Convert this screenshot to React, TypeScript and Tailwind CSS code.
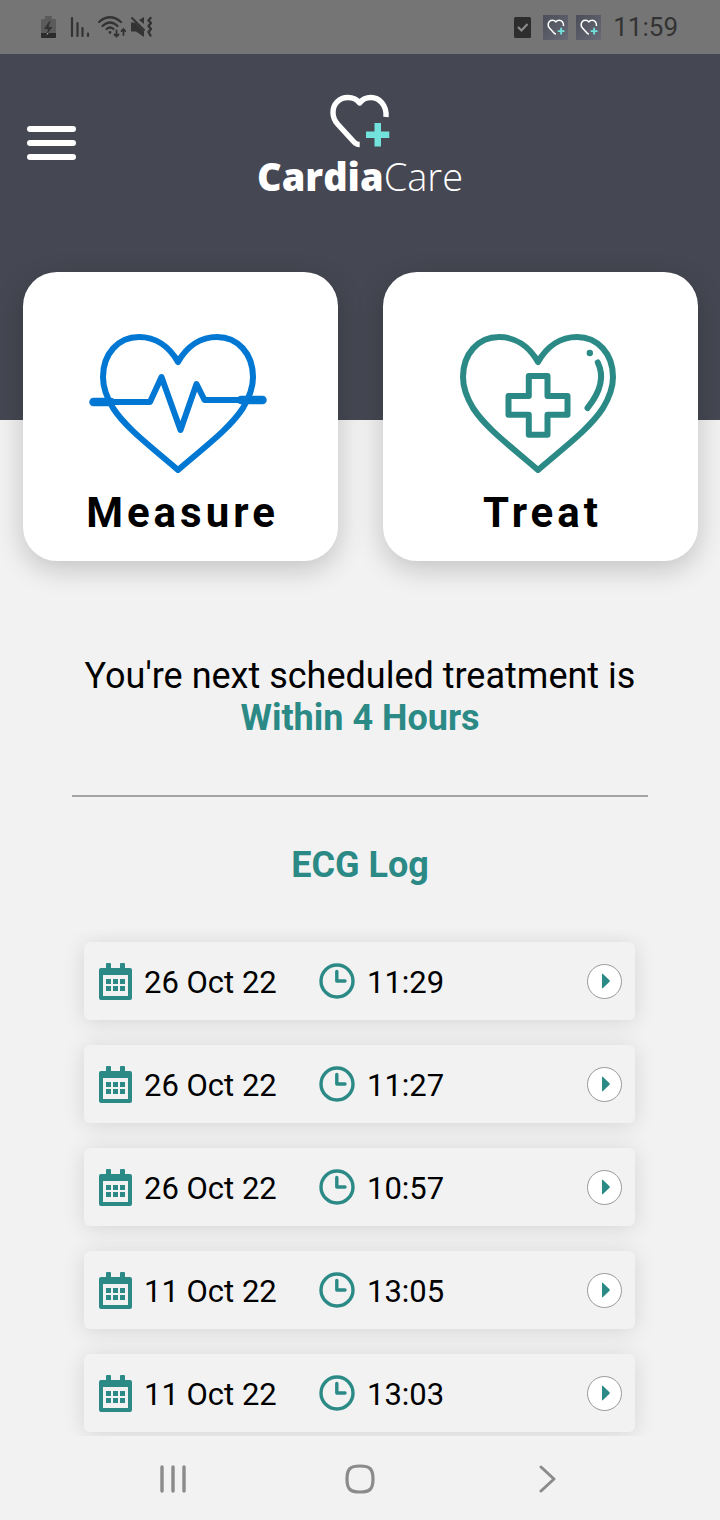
import React from 'react';

interface LogEntry {
  date: string;
  time: string;
}

const ecgLog: LogEntry[] = [
  { date: '26 Oct 22', time: '11:29' },
  { date: '26 Oct 22', time: '11:27' },
  { date: '26 Oct 22', time: '10:57' },
  { date: '11 Oct 22', time: '13:05' },
  { date: '11 Oct 22', time: '13:03' },
];

const HEART =
  'M89 30 C80 14 66 5 50 5 C29 5 14 22 14 45 C14 57 18 66 24 76 C37 96 60 113 89 138 C118 113 141 96 154 76 C160 66 164 57 164 45 C164 22 149 5 128 5 C112 5 98 14 89 30 Z';

const LogoMark: React.FC<{ className?: string }> = ({ className }) => (
  <svg viewBox="0 0 62 55" className={className} fill="none" aria-hidden="true">
    <path
      d="M57 24 C58 12 50 4.5 42 4.5 C37 4.5 33 6.500 30.700 10 C28 6.500 23 4.500 19 4.500 C10 4.500 4 11 4 19.500 C4 24 5.500 27.500 8.500 31 L25 49 C26.500 50.700 28 51.500 30.700 51.500"
      stroke="#ffffff"
      strokeWidth="5.4"
      strokeLinejoin="round"
    />
    <path d="M45.500 30 h6.500 v8.500 h8.300 v6.500 h-8.300 v8.500 h-6.500 v-8.500 h-8.500 v-6.500 h8.500 Z" fill="#74e2dc" />
  </svg>
);

const StatusBar: React.FC = () => (
  <div className="flex h-[54px] items-center justify-between bg-[#757575] pl-[41px] pr-[42px] text-[#333333]">
    <div className="flex items-center gap-2">
      <svg width="15" height="23" viewBox="0 0 15 23" aria-hidden="true">
        <path d="M4 0 h7 v3 h3 q1 0 1 1 v13 H0 V4 q0 -1 1 -1 h3 Z" fill="#5b5b5b" />
        <path d="M0 17 h15 v4 q0 1 -1 1 H1 q-1 0 -1 -1 Z" fill="#2b2b2b" />
        <path d="M8.500 5 L3 13 h4 L5.500 19 L11.500 11 h-4 L9.500 5 Z" fill="#333333" />
        <path d="M6.500 17 h1 l-2 2.500 Z" fill="#e5e5e5" />
      </svg>
      <svg width="34" height="22" viewBox="0 0 34 22" aria-hidden="true">
        <g transform="translate(6 0)" stroke="currentColor" strokeWidth="2.2" strokeLinecap="round">
          <path d="M2 2 V20 M7.500 7 V20 M12.500 12 V20 M18 17.500 V20" />
        </g>
      </svg>
      <svg width="28" height="22" viewBox="0 0 28 22" fill="none" stroke="currentColor" strokeWidth="2.2" strokeLinecap="round" className="-ml-2" aria-hidden="true">
        <path d="M1 6 Q12 -3.500 23 6 M4.500 10 Q12 3 19.500 10 M8.500 13 Q12 10 15.500 13" />
        <circle cx="12" cy="16.500" r="0.800" fill="currentColor" strokeWidth="1.200" />
        <path d="M18.500 14.500 V20.500 M16.500 18.500 L18.500 20.500 L20.500 18.500 M25.500 19 V13 M23.500 15 L25.500 13 L27.200 15" strokeWidth="1.800" />
      </svg>
      <svg width="23" height="22" viewBox="0 0 23 22" fill="none" stroke="currentColor" strokeWidth="2.400" strokeLinecap="round" className="-ml-1" aria-hidden="true">
        <path d="M1 6.500 h4 l9 9 v5.500 L6 15.500 H1 Z M9 4 L14 1 V8 Z" fill="currentColor" stroke="none" />
        <path d="M2 2 L14 14" strokeWidth="2" />
        <path d="M20.500 2 L18.500 4.500 L21 7 L18.500 10 L21 13 L18.500 16 L20.500 19.500" strokeLinejoin="round" />
      </svg>
    </div>
    <div className="flex items-center gap-2">
      <svg width="17" height="21" viewBox="0 0 17 21" className="mr-1" aria-hidden="true">
        <rect width="17" height="21" rx="1.500" fill="#2d2d2d" />
        <path d="M4 10 L7.500 13.500 L13.500 7" fill="none" stroke="#8a8a8a" strokeWidth="2.200" />
      </svg>
      {[0, 1].map(i => (
        <span key={i} className="flex size-[25px] items-center justify-center bg-gradient-to-br from-[#4b4d58] to-[#686b75]">
          <LogoMark className="w-[18px]" />
        </span>
      ))}
      <span className="ml-1 text-[26px] leading-8">11:59</span>
    </div>
  </div>
);

const Header: React.FC = () => (
  <header className="grid grid-cols-[1fr_auto_1fr] items-start bg-[#454752] px-[27px] pt-[39px] pb-[220px]">
    <button type="button" aria-label="Menu" className="mt-[33px] flex w-[49px] flex-col gap-2">
      <span className="h-1.5 w-full rounded-full bg-white" />
      <span className="h-1.5 w-full rounded-full bg-white" />
      <span className="h-1.5 w-full rounded-full bg-white" />
    </button>
    <div className="flex flex-col items-center">
      <LogoMark className="w-[62px]" />
      <p className="pt-1 font-['Open_Sans',sans-serif] text-[38px] leading-[48px] text-white">
        <span className="font-extrabold">Cardia</span>
        <span className="font-light">Care</span>
      </p>
    </div>
  </header>
);

const ActionCard: React.FC<{ label: string; children: React.ReactNode }> = ({ label, children }) => (
  <button
    type="button"
    className="flex flex-col items-center rounded-[34px] bg-white pt-[60px] pb-6 shadow-[0_8px_28px_rgba(0,0,0,0.2)]"
  >
    <svg width="184" height="144" viewBox="0 0 184 144" fill="none" strokeWidth="6" strokeLinecap="round" strokeLinejoin="round" aria-hidden="true">
      {children}
    </svg>
    <span className="mt-[13px] pl-1 text-[42px] leading-[48px] font-bold tracking-[4px] text-black">{label}</span>
  </button>
);

const CalendarIcon: React.FC = () => (
  <svg width="33" height="37" viewBox="0 0 33 37" fill="#2b8a86" aria-hidden="true">
    <path fillRule="evenodd" d="M7 1 q0 -1 1 -1 h3 q1 0 1 1 v4 h9 v-4 q0 -1 1 -1 h3 q1 0 1 1 v4 h5 q2 0 2 2 v28 q0 2 -2 2 H2 q-2 0 -2 -2 V7 q0 -2 2 -2 h5 Z M4 12 V33 H29 V12 Z" />
    <path d="M7 16 h5 v5 h-5 Z M14 16 h5 v5 h-5 Z M21 16 h5 v5 h-5 Z M7 23 h5 v5 h-5 Z M14 23 h5 v5 h-5 Z M21 23 h5 v5 h-5 Z" />
  </svg>
);

const ClockIcon: React.FC = () => (
  <svg width="36" height="36" viewBox="0 0 36 36" fill="none" stroke="#2b8a86" strokeWidth="3.400" aria-hidden="true">
    <circle cx="18" cy="18" r="16" />
    <path d="M17.800 8.500 V18 H26" strokeLinecap="round" strokeLinejoin="round" />
  </svg>
);

const LogRow: React.FC<{ entry: LogEntry }> = ({ entry }) => (
  <li className="flex h-[78px] items-center rounded-md bg-[#f2f2f2] pr-[13px] pl-[15px] text-[31px] leading-9 text-black shadow-[0_2px_22px_rgba(0,0,0,0.12)]">
    <CalendarIcon />
    <span className="ml-3 w-[175px] pt-1">{entry.date}</span>
    <ClockIcon />
    <span className="ml-3 flex-1 pt-1">{entry.time}</span>
    <button
      type="button"
      aria-label={`Open ${entry.date} ${entry.time}`}
      className="flex size-[35px] items-center justify-center rounded-full border border-[#9a9a9e] bg-white"
    >
      <svg width="10" height="16" viewBox="0 0 10 16" className="ml-0.5" aria-hidden="true">
        <path d="M1 1.500 Q1 0 2 1 L8.500 7.300 Q9.200 8 8.500 8.700 L2 15 Q1 16 1 14.500 Z" fill="#2b8a86" />
      </svg>
    </button>
  </li>
);

const NavBar: React.FC = () => (
  <nav className="grid h-[84px] grid-cols-3 items-center px-[79px] pt-0.5">
    <button type="button" aria-label="Recents" className="flex justify-center">
      <svg width="28" height="28" viewBox="0 0 28 28" stroke="#8b8b8b" strokeWidth="3.400" strokeLinecap="round">
        <path d="M3 2 V26 M14 2 V26 M25 2 V26" />
      </svg>
    </button>
    <button type="button" aria-label="Home" className="flex justify-center">
      <svg width="30" height="30" viewBox="0 0 30 30" fill="none" stroke="#8b8b8b" strokeWidth="3.200">
        <path d="M15 2 C25 2 28 5 28 15 C28 25 25 28 15 28 C5 28 2 25 2 15 C2 5 5 2 15 2 Z" />
      </svg>
    </button>
    <button type="button" aria-label="Back" className="flex justify-center">
      <svg width="18" height="28" viewBox="0 0 18 28" fill="none" stroke="#8b8b8b" strokeWidth="3" strokeLinecap="round" strokeLinejoin="round">
        <path d="M3 2 L16 14 L3 26" />
      </svg>
    </button>
  </nav>
);

const App: React.FC = () => {
  return (
    <div className="flex min-h-screen flex-col bg-[#f2f2f2] font-[Roboto,sans-serif]">
      <StatusBar />
      <Header />

      <main className="flex flex-1 flex-col">
        <div className="-mt-[148px] grid grid-cols-2 gap-[45px] pr-[22px] pl-[23px]">
          <ActionCard label="Measure">
            <g stroke="#0077d2">
              <path d={HEART} />
              <path d="M4 70 H61 L72.500 45 L91.500 98 L107.500 52 L115.500 68 H174" />
              <path d="M4.500 70 H22 M152 68 H173.500" strokeWidth="8.500" />
            </g>
          </ActionCard>
          <ActionCard label="Treat">
            <g stroke="#2b8a86">
              <path d={HEART} />
              <path d="M79.800 44 H98.500 V64 H118.500 V82.700 H98.500 V102.700 H79.800 V82.700 H59.500 V64 H79.800 Z" />
              <path d="M148.800 30.500 C155 43 153 58 138.500 76" />
            </g>
            <circle cx="140.800" cy="21" r="3.200" fill="#2b8a86" />
          </ActionCard>
        </div>

        <p className="mt-[94px] text-center text-[36px] leading-[42px] text-black">
          You're next scheduled treatment is
          <strong className="block font-bold text-[#2b8a86]">Within 4 Hours</strong>
        </p>

        <hr className="mx-[10%] mt-14 border-t-2 border-[#a3a5a5]" />

        <h2 className="mt-[47px] text-center text-[36px] leading-[42px] font-bold text-[#2b8a86]">ECG Log</h2>

        <ul className="mt-11 flex flex-1 flex-col gap-[25px] overflow-hidden pt-3 pr-[85px] pb-1 pl-[84px]">
          {ecgLog.map(entry => (
            <LogRow key={entry.date + entry.time} entry={entry} />
          ))}
        </ul>
      </main>

      <NavBar />
    </div>
  );
};

export default App;
